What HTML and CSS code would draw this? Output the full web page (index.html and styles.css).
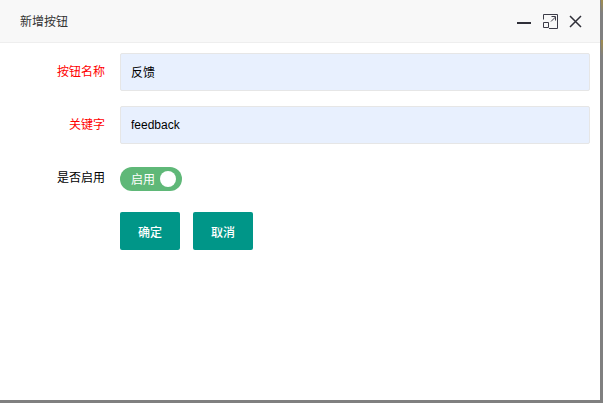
FILE: index.html
```html
<!DOCTYPE html>
<html lang="zh">
<head>
<meta charset="utf-8">
<title>新增按钮</title>
<link rel="stylesheet" href="styles.css">
</head>
<body>
<span class="edge-spot edge-spot-top"></span>
<span class="edge-spot edge-spot-low"></span>
<div class="layer">
  <header class="title-bar">
    <span class="title">新增按钮</span>
    <div class="win-tools">
      <svg class="win-icon icon-min" width="14" height="14" viewBox="0 0 14 14"><path d="M0 9H14" fill="none" stroke="#2f2f38" stroke-width="2"/></svg>
      <svg class="win-icon icon-max" width="15" height="15" viewBox="0 0 15 15"><path d="M.5 5.5V.5H14.5V14.5H6M.5 8.5H5.5V13.5H.5ZM8 7.5L12.5 3M8.5 2.5H12.5V6.5" fill="none" stroke="#3c3c48" stroke-width="1"/></svg>
      <svg class="win-icon" width="13" height="13" viewBox="0 0 13 13"><path d="M1 1L12 12M12 1L1 12" fill="none" stroke="#2f2f38" stroke-width="1.5"/></svg>
    </div>
  </header>
  <form class="form">
    <div class="row row-name">
      <label class="label required">按钮名称</label>
      <input class="input input-cjk" type="text" value="反馈">
    </div>
    <div class="row row-key">
      <label class="label required">关键字</label>
      <input class="input" type="text" value="feedback">
    </div>
    <div class="row row-switch">
      <label class="label label-lift">是否启用</label>
      <div class="switch"><span class="switch-text">启用</span><span class="knob"></span></div>
    </div>
    <div class="actions">
      <button class="btn" type="button">确定</button>
      <button class="btn" type="button">取消</button>
    </div>
  </form>
</div>
</body>
</html>
```
FILE: styles.css
```css
* { box-sizing: border-box; }
html, body { margin: 0; height: 100%; }
body {
  position: relative;
  width: 603px;
  height: 403px;
  overflow: hidden;
  background: #808080;
  font-family: "Liberation Sans", "Noto Sans CJK SC", sans-serif;
  font-size: 12px;
}
.edge-spot {
  position: absolute;
  left: 601px;
  width: 2px;
  background: linear-gradient(#a08c4c, #808080);
}
.edge-spot-top { top: 0; height: 13px; }
.edge-spot-low { top: 40px; height: 16px; }
.layer { width: 600px; height: 400px; background: #fff; }
.title-bar {
  height: 43px;
  padding: 0 18px 0 20px;
  display: flex;
  align-items: center;
  justify-content: space-between;
  background: #f8f8f8;
  border-bottom: 1px solid #eee;
}
.title { color: #333; font-size: 12px; padding-bottom: 2px; }
.win-tools { display: flex; align-items: center; gap: 11px; }
.win-icon { display: block; }
.icon-min { margin-right: 1px; }
.form { display: flex; flex-direction: column; }
.row { display: flex; align-items: center; padding-right: 10px; }
.row-name { margin-top: 10px; }
.row-key { margin-top: 15px; }
.row-switch { margin-top: 23px; }
.label { width: 105px; margin-right: 15px; text-align: right; color: #000; line-height: 20px; }
.label-lift { padding-bottom: 2px; height: 22px; }
.required { color: #f00; }
.input {
  flex: 1;
  height: 38px;
  padding: 0 10px;
  border: 1px solid #e6e6e6;
  border-radius: 2px;
  background: #e8f0fe;
  color: #000;
  font: 12px "Liberation Sans", "Noto Sans CJK SC", sans-serif;
}
.input-cjk { padding-bottom: 2px; }
.switch {
  width: 62px;
  height: 24px;
  padding: 0 6px 0 11px;
  display: flex;
  align-items: center;
  justify-content: space-between;
  border-radius: 12px;
  background: #5fb878;
  color: #fff;
}
.switch-text { padding-bottom: 2px; }
.knob { width: 16px; height: 16px; border-radius: 50%; background: #fff; }
.actions { display: flex; gap: 13px; margin: 21px 0 0 120px; }
.btn {
  width: 60px;
  height: 38px;
  padding: 0;
  border: 0;
  border-radius: 2px;
  background: #009688;
  color: #fff;
  font: 500 12px "Liberation Sans", "Noto Sans CJK SC", sans-serif;
}
```
